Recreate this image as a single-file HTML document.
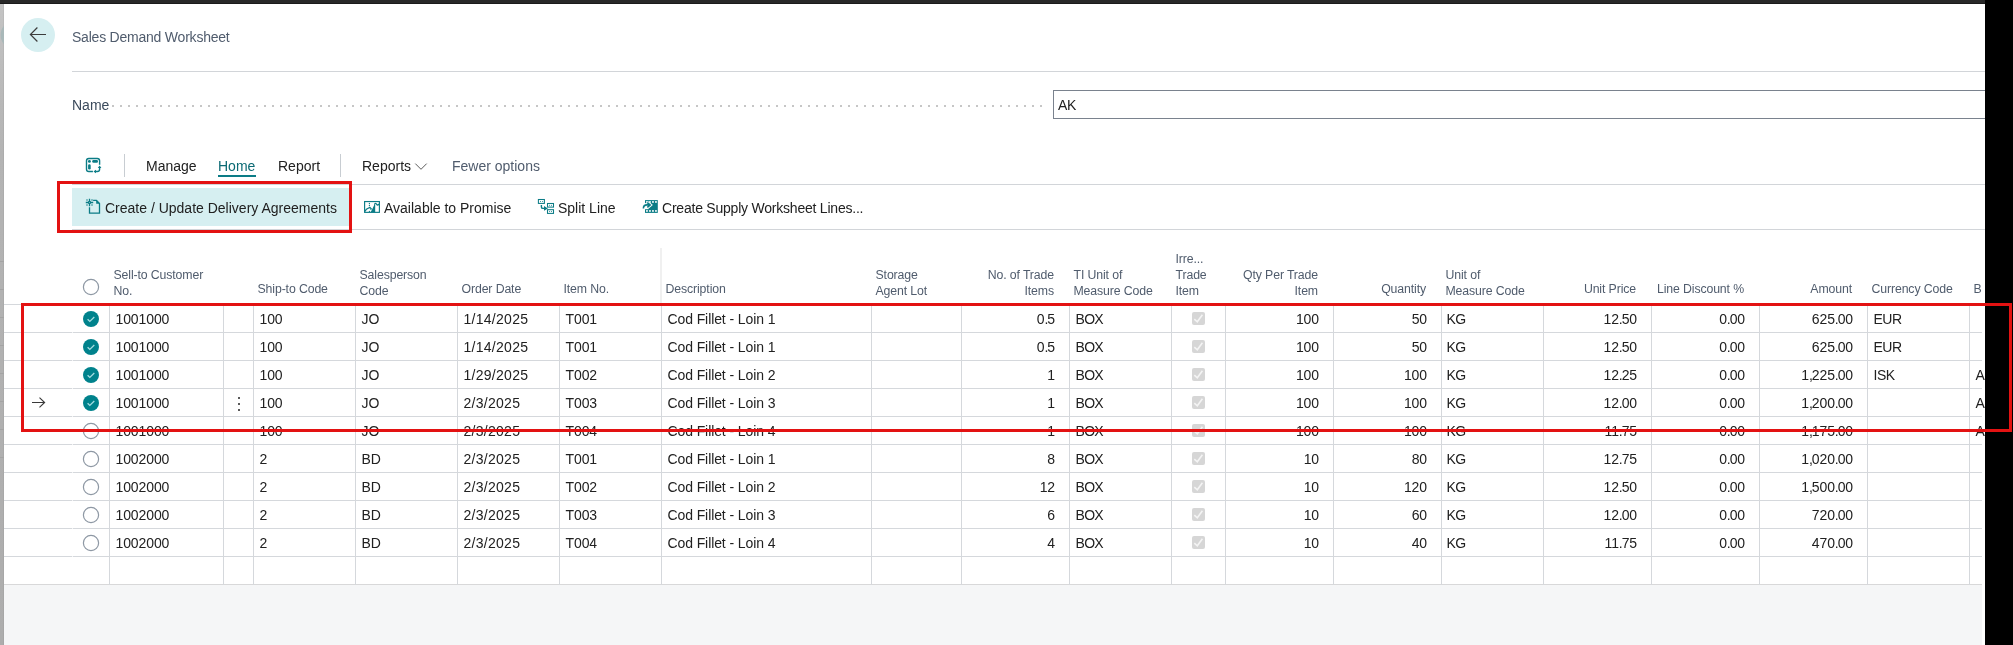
<!DOCTYPE html>
<html><head><meta charset="utf-8"><style>
html,body{margin:0;padding:0;}
body{width:2013px;height:645px;position:relative;overflow:hidden;background:#fff;font-family:"Liberation Sans", sans-serif;}
.t{position:absolute;white-space:nowrap;font-family:"Liberation Sans", sans-serif;}
#wrap{position:absolute;left:0;top:0;width:2013px;height:645px;will-change:transform;}
</style></head><body><div id="wrap">
<div style="position:absolute;left:0px;top:0px;width:2013px;height:4px;background:#282828"></div>
<div style="position:absolute;left:0px;top:3px;width:2013px;height:1px;background:#1a1a1a"></div>
<div style="position:absolute;left:0px;top:4px;width:4px;height:641px;background:linear-gradient(#c4c4c4 0px,#b8b8b8 100px,#b4b4b4 150px,#adadad 640px)"></div>
<div style="position:absolute;left:3px;top:4px;width:1px;height:641px;background:rgba(0,0,0,0.04)"></div>
<svg style="position:absolute;left:0;top:15px" width="4" height="40" viewBox="0 0 4 40"><circle cx="15" cy="20" r="14.4" fill="#a9b8b9"/></svg>
<div style="position:absolute;left:0px;top:261px;width:4px;height:1px;background:#a4a4a4"></div>
<div style="position:absolute;left:0px;top:289px;width:4px;height:1px;background:#a4a4a4"></div>
<div style="position:absolute;left:0px;top:317px;width:4px;height:1px;background:#a4a4a4"></div>
<div style="position:absolute;left:0px;top:345px;width:4px;height:1px;background:#a4a4a4"></div>
<div style="position:absolute;left:0px;top:373px;width:4px;height:1px;background:#a4a4a4"></div>
<div style="position:absolute;left:0px;top:401px;width:4px;height:1px;background:#a4a4a4"></div>
<div style="position:absolute;left:0px;top:429px;width:4px;height:1px;background:#a4a4a4"></div>
<div style="position:absolute;left:0px;top:457px;width:4px;height:1px;background:#a4a4a4"></div>
<div style="position:absolute;left:21px;top:18px;width:34px;height:34px;background:#d6eff1;border-radius:50%"></div>
<svg style="position:absolute;left:21px;top:18px" width="34" height="34" viewBox="0 0 34 34"><path d="M25 16.5H9.4M16.4 9.5L9.4 16.5l7 7" fill="none" stroke="#3c3c3c" stroke-width="1.2"/></svg>
<div class="t" style="left:72px;top:29px;font-size:14px;line-height:17.5px;color:#505c6d;letter-spacing:-0.22px">Sales Demand Worksheet</div>
<div style="position:absolute;left:72px;top:71px;width:1913px;height:1px;background:#d2d5d9"></div>
<div class="t" style="left:72px;top:97px;font-size:14px;line-height:17.5px;color:#3b4a5c;">Name</div>
<div style="position:absolute;left:109px;top:105px;width:938px;height:2px;background-image:radial-gradient(circle,#c6c6c6 0.9px,transparent 1.1px);background-size:8px 2px;background-position:0 0"></div>
<div style="position:absolute;left:1053px;top:90px;width:940px;height:29px;box-sizing:border-box;border:1px solid #7a828e;background:#fff"></div>
<div class="t" style="left:1058px;top:97px;font-size:14px;line-height:17.5px;color:#212121;letter-spacing:-0.3px">AK</div>
<svg style="position:absolute;left:84px;top:156px" width="18" height="18" viewBox="0 0 18 18"><g fill="none" stroke="#0b7c86" stroke-width="1.4"><path d="M15.6 8.7V4.8a2.3 2.3 0 0 0-2.3-2.3H4.8a2.3 2.3 0 0 0-2.3 2.3v8.4a2.3 2.3 0 0 0 2.3 2.3h4.1"/><path d="M15.6 10.9v2.3a2.3 2.3 0 0 1-2.3 2.3h-2.5"/></g><g fill="#0b7c86"><circle cx="5.4" cy="5.4" r="1.45"/><rect x="8.2" y="4.1" width="5.8" height="2.6" rx="1.3"/><rect x="4.1" y="8.2" width="2.6" height="5.4" rx="1.3"/><path d="M15.6 9.4l1.8 2.5h-3.6z"/><path d="M9.5 15.5l2.5-1.8v3.6z"/></g></svg>
<div style="position:absolute;left:124px;top:154px;width:1px;height:23px;background:#c8cdd2"></div>
<div style="position:absolute;left:340px;top:154px;width:1px;height:23px;background:#c8cdd2"></div>
<div class="t" style="left:146px;top:158px;font-size:14px;line-height:17.5px;color:#212121;">Manage</div>
<div class="t" style="left:218px;top:158px;font-size:14px;line-height:17.5px;color:#0b6a74;">Home</div>
<div style="position:absolute;left:218px;top:175px;width:38px;height:2px;background:#0b7c86"></div>
<div class="t" style="left:278px;top:158px;font-size:14px;line-height:17.5px;color:#212121;">Report</div>
<div class="t" style="left:362px;top:158px;font-size:14px;line-height:17.5px;color:#212121;">Reports</div>
<svg style="position:absolute;left:414px;top:161px" width="14" height="10" viewBox="0 0 14 10"><path d="M1.3 2.6l5.7 5.7 5.7-5.7" fill="none" stroke="#5a5a5a" stroke-width="1"/></svg>
<div class="t" style="left:452px;top:158px;font-size:14px;line-height:17.5px;color:#505c6d;">Fewer options</div>
<div style="position:absolute;left:72px;top:184px;width:1913px;height:1px;background:#d2d5d9"></div>
<div style="position:absolute;left:72px;top:229px;width:1913px;height:1px;background:#d2d5d9"></div>
<div style="position:absolute;left:72px;top:188px;width:277px;height:38px;background:#d6eff1"></div>
<svg style="position:absolute;left:84px;top:197px" width="18" height="18" viewBox="0 0 18 18"><g fill="none" stroke="#0b7c86" stroke-width="1.3"><path d="M5.5 10.2V16.2H15.5V6.6L12.4 3.4H9.1"/><path d="M5.5 1.8V4.3M5.5 6.7V9.2M1.8 5.5H4.3M6.7 5.5H9.2"/><circle cx="5.5" cy="5.5" r="1.1"/></g><g fill="#0b7c86"><circle cx="3" cy="3" r="0.75"/><circle cx="8" cy="3" r="0.75"/><circle cx="3" cy="8" r="0.75"/><circle cx="8" cy="8" r="0.75"/><path d="M12.2 3.4h0.8l2.5 2.6v0.7h-3.3z"/></g></svg>
<div class="t" style="left:105px;top:200px;font-size:14px;line-height:17.5px;color:#212121;">Create / Update Delivery Agreements</div>
<svg style="position:absolute;left:362px;top:199px" width="20" height="16" viewBox="0 0 20 16"><rect x="2.6" y="2.55" width="14.8" height="10.8" fill="none" stroke="#0b7c86" stroke-width="1.15"/><path d="M2.6 12.6L4.4 10.3L6.2 9.3L8 8.4L9.3 9.8L8.4 10.4" fill="none" stroke="#0b7c86" stroke-width="1.2"/><path d="M8.6 13.3L10.2 10.2L12 6.6L12.4 4.4H13.2V13.3Z" fill="#0b7c86"/><path d="M12.6 4.7Q14 3.9 14.8 5.5Q15.6 6.6 16.6 5.5L17.4 4.9" fill="none" stroke="#0b7c86" stroke-width="1.3"/><g fill="#0b7c86"><circle cx="7.4" cy="4.5" r="0.65"/><circle cx="7.4" cy="6.5" r="0.65"/><circle cx="7.4" cy="8.5" r="0.65"/><circle cx="7.4" cy="12.4" r="0.6"/></g></svg>
<div class="t" style="left:384px;top:200px;font-size:14px;line-height:17.5px;color:#212121;">Available to Promise</div>
<svg style="position:absolute;left:530px;top:192px" width="26" height="24" viewBox="0 0 26 24"><g fill="none" stroke="#0b7c86" stroke-width="1.05"><rect x="8.4" y="7.5" width="6" height="3.9"/><rect x="17.5" y="11.5" width="6" height="3.6"/><rect x="17.5" y="17.7" width="6" height="3.7"/><path d="M11.4 13.1V14.9Q11.4 16.4 13 16.4H15" stroke-width="1.4"/></g><g fill="#0b7c86"><circle cx="10.5" cy="9.5" r="0.5"/><circle cx="12.6" cy="9.5" r="0.5"/><circle cx="19.6" cy="13.3" r="0.5"/><circle cx="21.5" cy="13.3" r="0.5"/><circle cx="19.6" cy="19.5" r="0.5"/><circle cx="21.5" cy="19.5" r="0.5"/><path d="M14 14.1L17.9 16.4L14 18.8Z"/></g></svg>
<div class="t" style="left:558px;top:200px;font-size:14px;line-height:17.5px;color:#212121;">Split Line</div>
<svg style="position:absolute;left:635px;top:192px" width="26" height="24" viewBox="0 0 26 24"><path d="M10 8.1H22.8V20.9H10Z" fill="#0b7c86"/><g fill="#fff"><rect x="11.1" y="9.1" width="1.7" height="1.7"/><rect x="14.1" y="9.1" width="1.7" height="1.7"/><rect x="17.1" y="9.1" width="1.7" height="1.7"/><rect x="20.1" y="9.1" width="1.7" height="1.7"/><rect x="11.1" y="18.1" width="1.7" height="1.7"/><rect x="14.1" y="18.1" width="1.7" height="1.7"/><rect x="17.1" y="18.1" width="1.7" height="1.7"/><rect x="20.1" y="18.1" width="1.7" height="1.7"/><rect x="10" y="11.2" width="3.4" height="6"/></g><g fill="none" stroke-linejoin="miter"><path d="M8.4 16.4C8.4 13.8 9.8 12.9 12 12.9H14.2M12.3 10.6L15.2 13L12.3 15.4" stroke="#fff" stroke-width="3.4"/><path d="M8.4 16.4C8.4 13.8 9.8 12.9 12 12.9H14.2M12.3 10.6L15.2 13L12.3 15.4" stroke="#0b7c86" stroke-width="1.6"/></g></svg>
<div class="t" style="left:662px;top:200px;font-size:14px;line-height:17.5px;color:#212121;letter-spacing:-0.22px">Create Supply Worksheet Lines...</div>
<div style="position:absolute;left:660px;top:248px;width:2px;height:56px;background:#f0f0f0"></div>
<svg style="position:absolute;left:82px;top:278px" width="18" height="18" viewBox="0 0 18 18"><circle cx="9" cy="9" r="7.6" fill="none" stroke="#8e98a4" stroke-width="1.2"/></svg>
<div class="t" style="left:113.5px;top:268px;font-size:12.3px;line-height:15.375px;color:#505c6d;letter-spacing:-0.12px">Sell-to Customer</div>
<div class="t" style="left:113.5px;top:284px;font-size:12.3px;line-height:15.375px;color:#505c6d;letter-spacing:-0.12px">No.</div>
<div class="t" style="left:257.5px;top:282px;font-size:12.3px;line-height:15.375px;color:#505c6d;letter-spacing:-0.12px">Ship-to Code</div>
<div class="t" style="left:359.5px;top:268px;font-size:12.3px;line-height:15.375px;color:#505c6d;letter-spacing:-0.12px">Salesperson</div>
<div class="t" style="left:359.5px;top:284px;font-size:12.3px;line-height:15.375px;color:#505c6d;letter-spacing:-0.12px">Code</div>
<div class="t" style="left:461.5px;top:282px;font-size:12.3px;line-height:15.375px;color:#505c6d;letter-spacing:-0.12px">Order Date</div>
<div class="t" style="left:563.5px;top:282px;font-size:12.3px;line-height:15.375px;color:#505c6d;letter-spacing:-0.12px">Item No.</div>
<div class="t" style="left:665.5px;top:282px;font-size:12.3px;line-height:15.375px;color:#505c6d;letter-spacing:-0.12px">Description</div>
<div class="t" style="left:875.5px;top:268px;font-size:12.3px;line-height:15.375px;color:#505c6d;letter-spacing:-0.12px">Storage</div>
<div class="t" style="left:875.5px;top:284px;font-size:12.3px;line-height:15.375px;color:#505c6d;letter-spacing:-0.12px">Agent Lot</div>
<div class="t" style="right:959px;text-align:right;top:268px;font-size:12.3px;line-height:15.375px;color:#505c6d;letter-spacing:-0.12px">No. of Trade</div>
<div class="t" style="right:959px;text-align:right;top:284px;font-size:12.3px;line-height:15.375px;color:#505c6d;letter-spacing:-0.12px">Items</div>
<div class="t" style="left:1073.5px;top:268px;font-size:12.3px;line-height:15.375px;color:#505c6d;letter-spacing:-0.12px">TI Unit of</div>
<div class="t" style="left:1073.5px;top:284px;font-size:12.3px;line-height:15.375px;color:#505c6d;letter-spacing:-0.12px">Measure Code</div>
<div class="t" style="left:1175.5px;top:252px;font-size:12.3px;line-height:15.375px;color:#505c6d;letter-spacing:-0.12px">Irre...</div>
<div class="t" style="left:1175.5px;top:268px;font-size:12.3px;line-height:15.375px;color:#505c6d;letter-spacing:-0.12px">Trade</div>
<div class="t" style="left:1175.5px;top:284px;font-size:12.3px;line-height:15.375px;color:#505c6d;letter-spacing:-0.12px">Item</div>
<div class="t" style="right:695px;text-align:right;top:268px;font-size:12.3px;line-height:15.375px;color:#505c6d;letter-spacing:-0.12px">Qty Per Trade</div>
<div class="t" style="right:695px;text-align:right;top:284px;font-size:12.3px;line-height:15.375px;color:#505c6d;letter-spacing:-0.12px">Item</div>
<div class="t" style="right:587px;text-align:right;top:282px;font-size:12.3px;line-height:15.375px;color:#505c6d;letter-spacing:-0.12px">Quantity</div>
<div class="t" style="left:1445.5px;top:268px;font-size:12.3px;line-height:15.375px;color:#505c6d;letter-spacing:-0.12px">Unit of</div>
<div class="t" style="left:1445.5px;top:284px;font-size:12.3px;line-height:15.375px;color:#505c6d;letter-spacing:-0.12px">Measure Code</div>
<div class="t" style="right:377px;text-align:right;top:282px;font-size:12.3px;line-height:15.375px;color:#505c6d;letter-spacing:-0.12px">Unit Price</div>
<div class="t" style="right:269px;text-align:right;top:282px;font-size:12.3px;line-height:15.375px;color:#505c6d;letter-spacing:-0.12px">Line Discount %</div>
<div class="t" style="right:161px;text-align:right;top:282px;font-size:12.3px;line-height:15.375px;color:#505c6d;letter-spacing:-0.12px">Amount</div>
<div class="t" style="left:1871.5px;top:282px;font-size:12.3px;line-height:15.375px;color:#505c6d;letter-spacing:-0.12px">Currency Code</div>
<div class="t" style="left:1973.5px;top:282px;font-size:12.3px;line-height:15.375px;color:#505c6d;letter-spacing:-0.12px">B</div>
<div style="position:absolute;left:4px;top:304px;width:1978px;height:1px;background:#d5d8dc"></div>
<div style="position:absolute;left:4px;top:332px;width:1978px;height:1px;background:#d5d8dc"></div>
<div style="position:absolute;left:4px;top:360px;width:1978px;height:1px;background:#d5d8dc"></div>
<div style="position:absolute;left:4px;top:388px;width:1978px;height:1px;background:#d5d8dc"></div>
<div style="position:absolute;left:4px;top:416px;width:1978px;height:1px;background:#d5d8dc"></div>
<div style="position:absolute;left:4px;top:444px;width:1978px;height:1px;background:#d5d8dc"></div>
<div style="position:absolute;left:4px;top:472px;width:1978px;height:1px;background:#d5d8dc"></div>
<div style="position:absolute;left:4px;top:500px;width:1978px;height:1px;background:#d5d8dc"></div>
<div style="position:absolute;left:4px;top:528px;width:1978px;height:1px;background:#d5d8dc"></div>
<div style="position:absolute;left:4px;top:556px;width:1978px;height:1px;background:#d5d8dc"></div>
<div style="position:absolute;left:4px;top:584px;width:1978px;height:1px;background:#d8d8d9"></div>
<div style="position:absolute;left:109px;top:305px;width:1px;height:280px;background:#d5d8dc"></div>
<div style="position:absolute;left:223px;top:305px;width:1px;height:280px;background:#d5d8dc"></div>
<div style="position:absolute;left:253px;top:305px;width:1px;height:280px;background:#d5d8dc"></div>
<div style="position:absolute;left:355px;top:305px;width:1px;height:280px;background:#d5d8dc"></div>
<div style="position:absolute;left:457px;top:305px;width:1px;height:280px;background:#d5d8dc"></div>
<div style="position:absolute;left:559px;top:305px;width:1px;height:280px;background:#d5d8dc"></div>
<div style="position:absolute;left:661px;top:305px;width:1px;height:280px;background:#d5d8dc"></div>
<div style="position:absolute;left:871px;top:305px;width:1px;height:280px;background:#d5d8dc"></div>
<div style="position:absolute;left:961px;top:305px;width:1px;height:280px;background:#d5d8dc"></div>
<div style="position:absolute;left:1069px;top:305px;width:1px;height:280px;background:#d5d8dc"></div>
<div style="position:absolute;left:1171px;top:305px;width:1px;height:280px;background:#d5d8dc"></div>
<div style="position:absolute;left:1225px;top:305px;width:1px;height:280px;background:#d5d8dc"></div>
<div style="position:absolute;left:1333px;top:305px;width:1px;height:280px;background:#d5d8dc"></div>
<div style="position:absolute;left:1441px;top:305px;width:1px;height:280px;background:#d5d8dc"></div>
<div style="position:absolute;left:1543px;top:305px;width:1px;height:280px;background:#d5d8dc"></div>
<div style="position:absolute;left:1651px;top:305px;width:1px;height:280px;background:#d5d8dc"></div>
<div style="position:absolute;left:1759px;top:305px;width:1px;height:280px;background:#d5d8dc"></div>
<div style="position:absolute;left:1867px;top:305px;width:1px;height:280px;background:#d5d8dc"></div>
<div style="position:absolute;left:1969px;top:305px;width:1px;height:280px;background:#d5d8dc"></div>
<div style="position:absolute;left:72px;top:332px;width:1px;height:1px;background:#f2f3f4"></div>
<div style="position:absolute;left:72px;top:360px;width:1px;height:1px;background:#f2f3f4"></div>
<div style="position:absolute;left:72px;top:388px;width:1px;height:1px;background:#f2f3f4"></div>
<div style="position:absolute;left:72px;top:416px;width:1px;height:1px;background:#f2f3f4"></div>
<div style="position:absolute;left:72px;top:444px;width:1px;height:1px;background:#f2f3f4"></div>
<div style="position:absolute;left:72px;top:472px;width:1px;height:1px;background:#f2f3f4"></div>
<div style="position:absolute;left:72px;top:500px;width:1px;height:1px;background:#f2f3f4"></div>
<div style="position:absolute;left:72px;top:528px;width:1px;height:1px;background:#f2f3f4"></div>
<div style="position:absolute;left:72px;top:556px;width:1px;height:1px;background:#f2f3f4"></div>
<div style="position:absolute;left:4px;top:585px;width:1978px;height:60px;background:#f5f6f7"></div>
<svg style="position:absolute;left:82px;top:310px" width="18" height="18" viewBox="0 0 18 18"><circle cx="9" cy="9" r="8" fill="#00828c"/><path d="M5.6 9.3l2.2 2.1 4.5-4.4" fill="none" stroke="#a6dde2" stroke-width="1.3"/></svg>
<div class="t" style="left:115.5px;top:311px;font-size:14px;line-height:17.5px;color:#212121;letter-spacing:-0.1px">1001000</div>
<div class="t" style="left:259.5px;top:311px;font-size:14px;line-height:17.5px;color:#212121;letter-spacing:-0.1px">100</div>
<div class="t" style="left:361.5px;top:311px;font-size:14px;line-height:17.5px;color:#212121;letter-spacing:-0.1px">JO</div>
<div class="t" style="left:463.5px;top:311px;font-size:14px;line-height:17.5px;color:#212121;letter-spacing:0.28px">1/14/2025</div>
<div class="t" style="left:565.5px;top:311px;font-size:14px;line-height:17.5px;color:#212121;letter-spacing:-0.1px">T001</div>
<div class="t" style="left:667.5px;top:311px;font-size:14px;line-height:17.5px;color:#212121;letter-spacing:-0.1px">Cod Fillet - Loin 1</div>
<div class="t" style="right:958px;text-align:right;top:311px;font-size:14px;line-height:17.5px;color:#212121;letter-spacing:-0.1px">0<span style="letter-spacing:-1.1px">.</span>5</div>
<div class="t" style="left:1075.5px;top:311px;font-size:14px;line-height:17.5px;color:#212121;letter-spacing:-0.7px">BOX</div>
<svg style="position:absolute;left:1192px;top:312px" width="13" height="13" viewBox="0 0 13 13"><rect width="13" height="13" rx="2" fill="#d6d6d6"/><path d="M2.3 7.1L5.3 9.8L10.4 2.8" fill="none" stroke="#f4f4f4" stroke-width="1.6"/></svg>
<div class="t" style="right:694px;text-align:right;top:311px;font-size:14px;line-height:17.5px;color:#212121;letter-spacing:-0.1px">100</div>
<div class="t" style="right:586px;text-align:right;top:311px;font-size:14px;line-height:17.5px;color:#212121;letter-spacing:-0.1px">50</div>
<div class="t" style="left:1446.5px;top:311px;font-size:14px;line-height:17.5px;color:#212121;letter-spacing:-0.5px">KG</div>
<div class="t" style="right:376px;text-align:right;top:311px;font-size:14px;line-height:17.5px;color:#212121;letter-spacing:-0.1px">12<span style="letter-spacing:-1.1px">.</span>50</div>
<div class="t" style="right:268px;text-align:right;top:311px;font-size:14px;line-height:17.5px;color:#212121;letter-spacing:-0.1px">0<span style="letter-spacing:-1.1px">.</span>00</div>
<div class="t" style="right:160px;text-align:right;top:311px;font-size:14px;line-height:17.5px;color:#212121;letter-spacing:-0.1px">625<span style="letter-spacing:-1.1px">.</span>00</div>
<div class="t" style="left:1873.5px;top:311px;font-size:14px;line-height:17.5px;color:#212121;letter-spacing:-0.5px">EUR</div>
<svg style="position:absolute;left:82px;top:338px" width="18" height="18" viewBox="0 0 18 18"><circle cx="9" cy="9" r="8" fill="#00828c"/><path d="M5.6 9.3l2.2 2.1 4.5-4.4" fill="none" stroke="#a6dde2" stroke-width="1.3"/></svg>
<div class="t" style="left:115.5px;top:339px;font-size:14px;line-height:17.5px;color:#212121;letter-spacing:-0.1px">1001000</div>
<div class="t" style="left:259.5px;top:339px;font-size:14px;line-height:17.5px;color:#212121;letter-spacing:-0.1px">100</div>
<div class="t" style="left:361.5px;top:339px;font-size:14px;line-height:17.5px;color:#212121;letter-spacing:-0.1px">JO</div>
<div class="t" style="left:463.5px;top:339px;font-size:14px;line-height:17.5px;color:#212121;letter-spacing:0.28px">1/14/2025</div>
<div class="t" style="left:565.5px;top:339px;font-size:14px;line-height:17.5px;color:#212121;letter-spacing:-0.1px">T001</div>
<div class="t" style="left:667.5px;top:339px;font-size:14px;line-height:17.5px;color:#212121;letter-spacing:-0.1px">Cod Fillet - Loin 1</div>
<div class="t" style="right:958px;text-align:right;top:339px;font-size:14px;line-height:17.5px;color:#212121;letter-spacing:-0.1px">0<span style="letter-spacing:-1.1px">.</span>5</div>
<div class="t" style="left:1075.5px;top:339px;font-size:14px;line-height:17.5px;color:#212121;letter-spacing:-0.7px">BOX</div>
<svg style="position:absolute;left:1192px;top:340px" width="13" height="13" viewBox="0 0 13 13"><rect width="13" height="13" rx="2" fill="#d6d6d6"/><path d="M2.3 7.1L5.3 9.8L10.4 2.8" fill="none" stroke="#f4f4f4" stroke-width="1.6"/></svg>
<div class="t" style="right:694px;text-align:right;top:339px;font-size:14px;line-height:17.5px;color:#212121;letter-spacing:-0.1px">100</div>
<div class="t" style="right:586px;text-align:right;top:339px;font-size:14px;line-height:17.5px;color:#212121;letter-spacing:-0.1px">50</div>
<div class="t" style="left:1446.5px;top:339px;font-size:14px;line-height:17.5px;color:#212121;letter-spacing:-0.5px">KG</div>
<div class="t" style="right:376px;text-align:right;top:339px;font-size:14px;line-height:17.5px;color:#212121;letter-spacing:-0.1px">12<span style="letter-spacing:-1.1px">.</span>50</div>
<div class="t" style="right:268px;text-align:right;top:339px;font-size:14px;line-height:17.5px;color:#212121;letter-spacing:-0.1px">0<span style="letter-spacing:-1.1px">.</span>00</div>
<div class="t" style="right:160px;text-align:right;top:339px;font-size:14px;line-height:17.5px;color:#212121;letter-spacing:-0.1px">625<span style="letter-spacing:-1.1px">.</span>00</div>
<div class="t" style="left:1873.5px;top:339px;font-size:14px;line-height:17.5px;color:#212121;letter-spacing:-0.5px">EUR</div>
<svg style="position:absolute;left:82px;top:366px" width="18" height="18" viewBox="0 0 18 18"><circle cx="9" cy="9" r="8" fill="#00828c"/><path d="M5.6 9.3l2.2 2.1 4.5-4.4" fill="none" stroke="#a6dde2" stroke-width="1.3"/></svg>
<div class="t" style="left:115.5px;top:367px;font-size:14px;line-height:17.5px;color:#212121;letter-spacing:-0.1px">1001000</div>
<div class="t" style="left:259.5px;top:367px;font-size:14px;line-height:17.5px;color:#212121;letter-spacing:-0.1px">100</div>
<div class="t" style="left:361.5px;top:367px;font-size:14px;line-height:17.5px;color:#212121;letter-spacing:-0.1px">JO</div>
<div class="t" style="left:463.5px;top:367px;font-size:14px;line-height:17.5px;color:#212121;letter-spacing:0.28px">1/29/2025</div>
<div class="t" style="left:565.5px;top:367px;font-size:14px;line-height:17.5px;color:#212121;letter-spacing:-0.1px">T002</div>
<div class="t" style="left:667.5px;top:367px;font-size:14px;line-height:17.5px;color:#212121;letter-spacing:-0.1px">Cod Fillet - Loin 2</div>
<div class="t" style="right:958px;text-align:right;top:367px;font-size:14px;line-height:17.5px;color:#212121;letter-spacing:-0.1px">1</div>
<div class="t" style="left:1075.5px;top:367px;font-size:14px;line-height:17.5px;color:#212121;letter-spacing:-0.7px">BOX</div>
<svg style="position:absolute;left:1192px;top:368px" width="13" height="13" viewBox="0 0 13 13"><rect width="13" height="13" rx="2" fill="#d6d6d6"/><path d="M2.3 7.1L5.3 9.8L10.4 2.8" fill="none" stroke="#f4f4f4" stroke-width="1.6"/></svg>
<div class="t" style="right:694px;text-align:right;top:367px;font-size:14px;line-height:17.5px;color:#212121;letter-spacing:-0.1px">100</div>
<div class="t" style="right:586px;text-align:right;top:367px;font-size:14px;line-height:17.5px;color:#212121;letter-spacing:-0.1px">100</div>
<div class="t" style="left:1446.5px;top:367px;font-size:14px;line-height:17.5px;color:#212121;letter-spacing:-0.5px">KG</div>
<div class="t" style="right:376px;text-align:right;top:367px;font-size:14px;line-height:17.5px;color:#212121;letter-spacing:-0.1px">12<span style="letter-spacing:-1.1px">.</span>25</div>
<div class="t" style="right:268px;text-align:right;top:367px;font-size:14px;line-height:17.5px;color:#212121;letter-spacing:-0.1px">0<span style="letter-spacing:-1.1px">.</span>00</div>
<div class="t" style="right:160px;text-align:right;top:367px;font-size:14px;line-height:17.5px;color:#212121;letter-spacing:-0.1px">1<span style="letter-spacing:-1.1px">,</span>225<span style="letter-spacing:-1.1px">.</span>00</div>
<div class="t" style="left:1873.5px;top:367px;font-size:14px;line-height:17.5px;color:#212121;letter-spacing:-0.5px">ISK</div>
<div class="t" style="left:1975.5px;top:367px;font-size:14px;line-height:17.5px;color:#212121;letter-spacing:-0.1px">A</div>
<svg style="position:absolute;left:82px;top:394px" width="18" height="18" viewBox="0 0 18 18"><circle cx="9" cy="9" r="8" fill="#00828c"/><path d="M5.6 9.3l2.2 2.1 4.5-4.4" fill="none" stroke="#a6dde2" stroke-width="1.3"/></svg>
<div class="t" style="left:115.5px;top:395px;font-size:14px;line-height:17.5px;color:#212121;letter-spacing:-0.1px">1001000</div>
<div class="t" style="left:259.5px;top:395px;font-size:14px;line-height:17.5px;color:#212121;letter-spacing:-0.1px">100</div>
<div class="t" style="left:361.5px;top:395px;font-size:14px;line-height:17.5px;color:#212121;letter-spacing:-0.1px">JO</div>
<div class="t" style="left:463.5px;top:395px;font-size:14px;line-height:17.5px;color:#212121;letter-spacing:0.28px">2/3/2025</div>
<div class="t" style="left:565.5px;top:395px;font-size:14px;line-height:17.5px;color:#212121;letter-spacing:-0.1px">T003</div>
<div class="t" style="left:667.5px;top:395px;font-size:14px;line-height:17.5px;color:#212121;letter-spacing:-0.1px">Cod Fillet - Loin 3</div>
<div class="t" style="right:958px;text-align:right;top:395px;font-size:14px;line-height:17.5px;color:#212121;letter-spacing:-0.1px">1</div>
<div class="t" style="left:1075.5px;top:395px;font-size:14px;line-height:17.5px;color:#212121;letter-spacing:-0.7px">BOX</div>
<svg style="position:absolute;left:1192px;top:396px" width="13" height="13" viewBox="0 0 13 13"><rect width="13" height="13" rx="2" fill="#d6d6d6"/><path d="M2.3 7.1L5.3 9.8L10.4 2.8" fill="none" stroke="#f4f4f4" stroke-width="1.6"/></svg>
<div class="t" style="right:694px;text-align:right;top:395px;font-size:14px;line-height:17.5px;color:#212121;letter-spacing:-0.1px">100</div>
<div class="t" style="right:586px;text-align:right;top:395px;font-size:14px;line-height:17.5px;color:#212121;letter-spacing:-0.1px">100</div>
<div class="t" style="left:1446.5px;top:395px;font-size:14px;line-height:17.5px;color:#212121;letter-spacing:-0.5px">KG</div>
<div class="t" style="right:376px;text-align:right;top:395px;font-size:14px;line-height:17.5px;color:#212121;letter-spacing:-0.1px">12<span style="letter-spacing:-1.1px">.</span>00</div>
<div class="t" style="right:268px;text-align:right;top:395px;font-size:14px;line-height:17.5px;color:#212121;letter-spacing:-0.1px">0<span style="letter-spacing:-1.1px">.</span>00</div>
<div class="t" style="right:160px;text-align:right;top:395px;font-size:14px;line-height:17.5px;color:#212121;letter-spacing:-0.1px">1<span style="letter-spacing:-1.1px">,</span>200<span style="letter-spacing:-1.1px">.</span>00</div>
<div class="t" style="left:1873.5px;top:395px;font-size:14px;line-height:17.5px;color:#212121;letter-spacing:-0.5px"></div>
<div class="t" style="left:1975.5px;top:395px;font-size:14px;line-height:17.5px;color:#212121;letter-spacing:-0.1px">A</div>
<svg style="position:absolute;left:28px;top:395px" width="20" height="16" viewBox="0 0 20 16"><path d="M4 7.5h12.6M11.5 2.6l5.1 4.9-5.1 4.9" fill="none" stroke="#3a3a3a" stroke-width="1.15"/></svg>
<div style="position:absolute;left:237.5px;top:397.0px;width:2px;height:2px;background:#222;border-radius:1px"></div>
<div style="position:absolute;left:237.5px;top:403.0px;width:2px;height:2px;background:#222;border-radius:1px"></div>
<div style="position:absolute;left:237.5px;top:409.0px;width:2px;height:2px;background:#222;border-radius:1px"></div>
<svg style="position:absolute;left:82px;top:422px" width="18" height="18" viewBox="0 0 18 18"><circle cx="9" cy="9" r="7.6" fill="none" stroke="#8e98a4" stroke-width="1.2"/></svg>
<div class="t" style="left:115.5px;top:423px;font-size:14px;line-height:17.5px;color:#212121;letter-spacing:-0.1px">1001000</div>
<div class="t" style="left:259.5px;top:423px;font-size:14px;line-height:17.5px;color:#212121;letter-spacing:-0.1px">100</div>
<div class="t" style="left:361.5px;top:423px;font-size:14px;line-height:17.5px;color:#212121;letter-spacing:-0.1px">JO</div>
<div class="t" style="left:463.5px;top:423px;font-size:14px;line-height:17.5px;color:#212121;letter-spacing:0.28px">2/3/2025</div>
<div class="t" style="left:565.5px;top:423px;font-size:14px;line-height:17.5px;color:#212121;letter-spacing:-0.1px">T004</div>
<div class="t" style="left:667.5px;top:423px;font-size:14px;line-height:17.5px;color:#212121;letter-spacing:-0.1px">Cod Fillet - Loin 4</div>
<div class="t" style="right:958px;text-align:right;top:423px;font-size:14px;line-height:17.5px;color:#212121;letter-spacing:-0.1px">1</div>
<div class="t" style="left:1075.5px;top:423px;font-size:14px;line-height:17.5px;color:#212121;letter-spacing:-0.7px">BOX</div>
<svg style="position:absolute;left:1192px;top:424px" width="13" height="13" viewBox="0 0 13 13"><rect width="13" height="13" rx="2" fill="#d6d6d6"/><path d="M2.3 7.1L5.3 9.8L10.4 2.8" fill="none" stroke="#f4f4f4" stroke-width="1.6"/></svg>
<div class="t" style="right:694px;text-align:right;top:423px;font-size:14px;line-height:17.5px;color:#212121;letter-spacing:-0.1px">100</div>
<div class="t" style="right:586px;text-align:right;top:423px;font-size:14px;line-height:17.5px;color:#212121;letter-spacing:-0.1px">100</div>
<div class="t" style="left:1446.5px;top:423px;font-size:14px;line-height:17.5px;color:#212121;letter-spacing:-0.5px">KG</div>
<div class="t" style="right:376px;text-align:right;top:423px;font-size:14px;line-height:17.5px;color:#212121;letter-spacing:-0.1px">11<span style="letter-spacing:-1.1px">.</span>75</div>
<div class="t" style="right:268px;text-align:right;top:423px;font-size:14px;line-height:17.5px;color:#212121;letter-spacing:-0.1px">0<span style="letter-spacing:-1.1px">.</span>00</div>
<div class="t" style="right:160px;text-align:right;top:423px;font-size:14px;line-height:17.5px;color:#212121;letter-spacing:-0.1px">1<span style="letter-spacing:-1.1px">,</span>175<span style="letter-spacing:-1.1px">.</span>00</div>
<div class="t" style="left:1873.5px;top:423px;font-size:14px;line-height:17.5px;color:#212121;letter-spacing:-0.5px"></div>
<div class="t" style="left:1975.5px;top:423px;font-size:14px;line-height:17.5px;color:#212121;letter-spacing:-0.1px">A</div>
<svg style="position:absolute;left:82px;top:450px" width="18" height="18" viewBox="0 0 18 18"><circle cx="9" cy="9" r="7.6" fill="none" stroke="#8e98a4" stroke-width="1.2"/></svg>
<div class="t" style="left:115.5px;top:451px;font-size:14px;line-height:17.5px;color:#212121;letter-spacing:-0.1px">1002000</div>
<div class="t" style="left:259.5px;top:451px;font-size:14px;line-height:17.5px;color:#212121;letter-spacing:-0.1px">2</div>
<div class="t" style="left:361.5px;top:451px;font-size:14px;line-height:17.5px;color:#212121;letter-spacing:-0.1px">BD</div>
<div class="t" style="left:463.5px;top:451px;font-size:14px;line-height:17.5px;color:#212121;letter-spacing:0.28px">2/3/2025</div>
<div class="t" style="left:565.5px;top:451px;font-size:14px;line-height:17.5px;color:#212121;letter-spacing:-0.1px">T001</div>
<div class="t" style="left:667.5px;top:451px;font-size:14px;line-height:17.5px;color:#212121;letter-spacing:-0.1px">Cod Fillet - Loin 1</div>
<div class="t" style="right:958px;text-align:right;top:451px;font-size:14px;line-height:17.5px;color:#212121;letter-spacing:-0.1px">8</div>
<div class="t" style="left:1075.5px;top:451px;font-size:14px;line-height:17.5px;color:#212121;letter-spacing:-0.7px">BOX</div>
<svg style="position:absolute;left:1192px;top:452px" width="13" height="13" viewBox="0 0 13 13"><rect width="13" height="13" rx="2" fill="#d6d6d6"/><path d="M2.3 7.1L5.3 9.8L10.4 2.8" fill="none" stroke="#f4f4f4" stroke-width="1.6"/></svg>
<div class="t" style="right:694px;text-align:right;top:451px;font-size:14px;line-height:17.5px;color:#212121;letter-spacing:-0.1px">10</div>
<div class="t" style="right:586px;text-align:right;top:451px;font-size:14px;line-height:17.5px;color:#212121;letter-spacing:-0.1px">80</div>
<div class="t" style="left:1446.5px;top:451px;font-size:14px;line-height:17.5px;color:#212121;letter-spacing:-0.5px">KG</div>
<div class="t" style="right:376px;text-align:right;top:451px;font-size:14px;line-height:17.5px;color:#212121;letter-spacing:-0.1px">12<span style="letter-spacing:-1.1px">.</span>75</div>
<div class="t" style="right:268px;text-align:right;top:451px;font-size:14px;line-height:17.5px;color:#212121;letter-spacing:-0.1px">0<span style="letter-spacing:-1.1px">.</span>00</div>
<div class="t" style="right:160px;text-align:right;top:451px;font-size:14px;line-height:17.5px;color:#212121;letter-spacing:-0.1px">1<span style="letter-spacing:-1.1px">,</span>020<span style="letter-spacing:-1.1px">.</span>00</div>
<div class="t" style="left:1873.5px;top:451px;font-size:14px;line-height:17.5px;color:#212121;letter-spacing:-0.5px"></div>
<svg style="position:absolute;left:82px;top:478px" width="18" height="18" viewBox="0 0 18 18"><circle cx="9" cy="9" r="7.6" fill="none" stroke="#8e98a4" stroke-width="1.2"/></svg>
<div class="t" style="left:115.5px;top:479px;font-size:14px;line-height:17.5px;color:#212121;letter-spacing:-0.1px">1002000</div>
<div class="t" style="left:259.5px;top:479px;font-size:14px;line-height:17.5px;color:#212121;letter-spacing:-0.1px">2</div>
<div class="t" style="left:361.5px;top:479px;font-size:14px;line-height:17.5px;color:#212121;letter-spacing:-0.1px">BD</div>
<div class="t" style="left:463.5px;top:479px;font-size:14px;line-height:17.5px;color:#212121;letter-spacing:0.28px">2/3/2025</div>
<div class="t" style="left:565.5px;top:479px;font-size:14px;line-height:17.5px;color:#212121;letter-spacing:-0.1px">T002</div>
<div class="t" style="left:667.5px;top:479px;font-size:14px;line-height:17.5px;color:#212121;letter-spacing:-0.1px">Cod Fillet - Loin 2</div>
<div class="t" style="right:958px;text-align:right;top:479px;font-size:14px;line-height:17.5px;color:#212121;letter-spacing:-0.1px">12</div>
<div class="t" style="left:1075.5px;top:479px;font-size:14px;line-height:17.5px;color:#212121;letter-spacing:-0.7px">BOX</div>
<svg style="position:absolute;left:1192px;top:480px" width="13" height="13" viewBox="0 0 13 13"><rect width="13" height="13" rx="2" fill="#d6d6d6"/><path d="M2.3 7.1L5.3 9.8L10.4 2.8" fill="none" stroke="#f4f4f4" stroke-width="1.6"/></svg>
<div class="t" style="right:694px;text-align:right;top:479px;font-size:14px;line-height:17.5px;color:#212121;letter-spacing:-0.1px">10</div>
<div class="t" style="right:586px;text-align:right;top:479px;font-size:14px;line-height:17.5px;color:#212121;letter-spacing:-0.1px">120</div>
<div class="t" style="left:1446.5px;top:479px;font-size:14px;line-height:17.5px;color:#212121;letter-spacing:-0.5px">KG</div>
<div class="t" style="right:376px;text-align:right;top:479px;font-size:14px;line-height:17.5px;color:#212121;letter-spacing:-0.1px">12<span style="letter-spacing:-1.1px">.</span>50</div>
<div class="t" style="right:268px;text-align:right;top:479px;font-size:14px;line-height:17.5px;color:#212121;letter-spacing:-0.1px">0<span style="letter-spacing:-1.1px">.</span>00</div>
<div class="t" style="right:160px;text-align:right;top:479px;font-size:14px;line-height:17.5px;color:#212121;letter-spacing:-0.1px">1<span style="letter-spacing:-1.1px">,</span>500<span style="letter-spacing:-1.1px">.</span>00</div>
<div class="t" style="left:1873.5px;top:479px;font-size:14px;line-height:17.5px;color:#212121;letter-spacing:-0.5px"></div>
<svg style="position:absolute;left:82px;top:506px" width="18" height="18" viewBox="0 0 18 18"><circle cx="9" cy="9" r="7.6" fill="none" stroke="#8e98a4" stroke-width="1.2"/></svg>
<div class="t" style="left:115.5px;top:507px;font-size:14px;line-height:17.5px;color:#212121;letter-spacing:-0.1px">1002000</div>
<div class="t" style="left:259.5px;top:507px;font-size:14px;line-height:17.5px;color:#212121;letter-spacing:-0.1px">2</div>
<div class="t" style="left:361.5px;top:507px;font-size:14px;line-height:17.5px;color:#212121;letter-spacing:-0.1px">BD</div>
<div class="t" style="left:463.5px;top:507px;font-size:14px;line-height:17.5px;color:#212121;letter-spacing:0.28px">2/3/2025</div>
<div class="t" style="left:565.5px;top:507px;font-size:14px;line-height:17.5px;color:#212121;letter-spacing:-0.1px">T003</div>
<div class="t" style="left:667.5px;top:507px;font-size:14px;line-height:17.5px;color:#212121;letter-spacing:-0.1px">Cod Fillet - Loin 3</div>
<div class="t" style="right:958px;text-align:right;top:507px;font-size:14px;line-height:17.5px;color:#212121;letter-spacing:-0.1px">6</div>
<div class="t" style="left:1075.5px;top:507px;font-size:14px;line-height:17.5px;color:#212121;letter-spacing:-0.7px">BOX</div>
<svg style="position:absolute;left:1192px;top:508px" width="13" height="13" viewBox="0 0 13 13"><rect width="13" height="13" rx="2" fill="#d6d6d6"/><path d="M2.3 7.1L5.3 9.8L10.4 2.8" fill="none" stroke="#f4f4f4" stroke-width="1.6"/></svg>
<div class="t" style="right:694px;text-align:right;top:507px;font-size:14px;line-height:17.5px;color:#212121;letter-spacing:-0.1px">10</div>
<div class="t" style="right:586px;text-align:right;top:507px;font-size:14px;line-height:17.5px;color:#212121;letter-spacing:-0.1px">60</div>
<div class="t" style="left:1446.5px;top:507px;font-size:14px;line-height:17.5px;color:#212121;letter-spacing:-0.5px">KG</div>
<div class="t" style="right:376px;text-align:right;top:507px;font-size:14px;line-height:17.5px;color:#212121;letter-spacing:-0.1px">12<span style="letter-spacing:-1.1px">.</span>00</div>
<div class="t" style="right:268px;text-align:right;top:507px;font-size:14px;line-height:17.5px;color:#212121;letter-spacing:-0.1px">0<span style="letter-spacing:-1.1px">.</span>00</div>
<div class="t" style="right:160px;text-align:right;top:507px;font-size:14px;line-height:17.5px;color:#212121;letter-spacing:-0.1px">720<span style="letter-spacing:-1.1px">.</span>00</div>
<div class="t" style="left:1873.5px;top:507px;font-size:14px;line-height:17.5px;color:#212121;letter-spacing:-0.5px"></div>
<svg style="position:absolute;left:82px;top:534px" width="18" height="18" viewBox="0 0 18 18"><circle cx="9" cy="9" r="7.6" fill="none" stroke="#8e98a4" stroke-width="1.2"/></svg>
<div class="t" style="left:115.5px;top:535px;font-size:14px;line-height:17.5px;color:#212121;letter-spacing:-0.1px">1002000</div>
<div class="t" style="left:259.5px;top:535px;font-size:14px;line-height:17.5px;color:#212121;letter-spacing:-0.1px">2</div>
<div class="t" style="left:361.5px;top:535px;font-size:14px;line-height:17.5px;color:#212121;letter-spacing:-0.1px">BD</div>
<div class="t" style="left:463.5px;top:535px;font-size:14px;line-height:17.5px;color:#212121;letter-spacing:0.28px">2/3/2025</div>
<div class="t" style="left:565.5px;top:535px;font-size:14px;line-height:17.5px;color:#212121;letter-spacing:-0.1px">T004</div>
<div class="t" style="left:667.5px;top:535px;font-size:14px;line-height:17.5px;color:#212121;letter-spacing:-0.1px">Cod Fillet - Loin 4</div>
<div class="t" style="right:958px;text-align:right;top:535px;font-size:14px;line-height:17.5px;color:#212121;letter-spacing:-0.1px">4</div>
<div class="t" style="left:1075.5px;top:535px;font-size:14px;line-height:17.5px;color:#212121;letter-spacing:-0.7px">BOX</div>
<svg style="position:absolute;left:1192px;top:536px" width="13" height="13" viewBox="0 0 13 13"><rect width="13" height="13" rx="2" fill="#d6d6d6"/><path d="M2.3 7.1L5.3 9.8L10.4 2.8" fill="none" stroke="#f4f4f4" stroke-width="1.6"/></svg>
<div class="t" style="right:694px;text-align:right;top:535px;font-size:14px;line-height:17.5px;color:#212121;letter-spacing:-0.1px">10</div>
<div class="t" style="right:586px;text-align:right;top:535px;font-size:14px;line-height:17.5px;color:#212121;letter-spacing:-0.1px">40</div>
<div class="t" style="left:1446.5px;top:535px;font-size:14px;line-height:17.5px;color:#212121;letter-spacing:-0.5px">KG</div>
<div class="t" style="right:376px;text-align:right;top:535px;font-size:14px;line-height:17.5px;color:#212121;letter-spacing:-0.1px">11<span style="letter-spacing:-1.1px">.</span>75</div>
<div class="t" style="right:268px;text-align:right;top:535px;font-size:14px;line-height:17.5px;color:#212121;letter-spacing:-0.1px">0<span style="letter-spacing:-1.1px">.</span>00</div>
<div class="t" style="right:160px;text-align:right;top:535px;font-size:14px;line-height:17.5px;color:#212121;letter-spacing:-0.1px">470<span style="letter-spacing:-1.1px">.</span>00</div>
<div class="t" style="left:1873.5px;top:535px;font-size:14px;line-height:17.5px;color:#212121;letter-spacing:-0.5px"></div>
<div style="position:absolute;left:1985px;top:0px;width:28px;height:645px;background:#000"></div>
<div style="position:absolute;left:57px;top:181px;width:295px;height:52px;box-sizing:border-box;border:3px solid #e31212"></div>
<div style="position:absolute;left:21px;top:303px;width:1991px;height:129px;box-sizing:border-box;border:3px solid #e31212"></div>
</div></body></html>
